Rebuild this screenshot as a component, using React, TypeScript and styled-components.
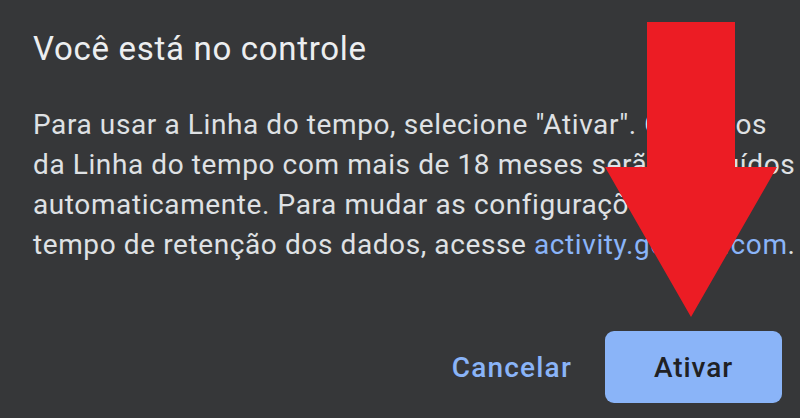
import React from "react";
import styled, { createGlobalStyle } from "styled-components";

const Global = createGlobalStyle`
  html, body { margin: 0; padding: 0; background: #363739; }
  body { width: 800px; height: 418px; overflow: hidden; }
`;

const Dialog = styled.div`
  position: relative;
  width: 800px;
  height: 418px;
  box-sizing: border-box;
  background: #363739;
  padding: 29px 18px 0 33px;
  display: flex;
  flex-direction: column;
  font-family: Roboto, "Noto Sans", sans-serif;
  color: #e8eaed;
`;

const Title = styled.h1`
  margin: 0;
  font-size: 33px;
  line-height: 40px;
  font-weight: 400;
  letter-spacing: 0.7px;
  color: #eceef0;
  white-space: nowrap;
`;

const Body = styled.p`
  margin: 36px 0 0;
  font-size: 28px;
  line-height: 40px;
  font-weight: 400;
  letter-spacing: 0.6px;
  color: #dfe1e4;
  white-space: nowrap;
`;

const Link = styled.span`
  color: #8ab4f8;
`;

const Actions = styled.div`
  margin-top: 66px;
  display: flex;
  justify-content: flex-end;
  align-items: center;
  gap: 33px;
`;

const TextButton = styled.button`
  border: 0;
  background: transparent;
  padding: 0;
  font-family: inherit;
  font-size: 28px;
  font-weight: 500;
  letter-spacing: 1.2px;
  color: #8ab4f8;
`;

const FilledButton = styled.button`
  border: 0;
  height: 72px;
  width: 177px;
  border-radius: 9px;
  background: #8ab4f8;
  color: #202124;
  font-family: inherit;
  font-size: 28px;
  font-weight: 500;
  letter-spacing: 0.9px;
`;

const ArrowOverlay = styled.svg`
  position: absolute;
  left: 0;
  top: 0;
  width: 800px;
  height: 418px;
  pointer-events: none;
`;

export default function App() {
  return (
    <>
      <Global />
      <Dialog>
        <Title>Você está no controle</Title>
        <Body>
          Para usar a Linha do tempo, selecione "Ativar". Os dados
          <br />
          da Linha do tempo com mais de 18 meses serão excluídos
          <br />
          automaticamente. Para mudar as configurações de
          <br />
          tempo de retenção dos dados, acesse <Link>activity.google.com</Link>.
        </Body>
        <Actions>
          <TextButton>Cancelar</TextButton>
          <FilledButton>Ativar</FilledButton>
        </Actions>
        <ArrowOverlay viewBox="0 0 800 418">
          <polygon
            points="647,22 735,22 735,167 777,167 691,317 605,167 647,167"
            fill="#ec1c24"
          />
        </ArrowOverlay>
      </Dialog>
    </>
  );
}
